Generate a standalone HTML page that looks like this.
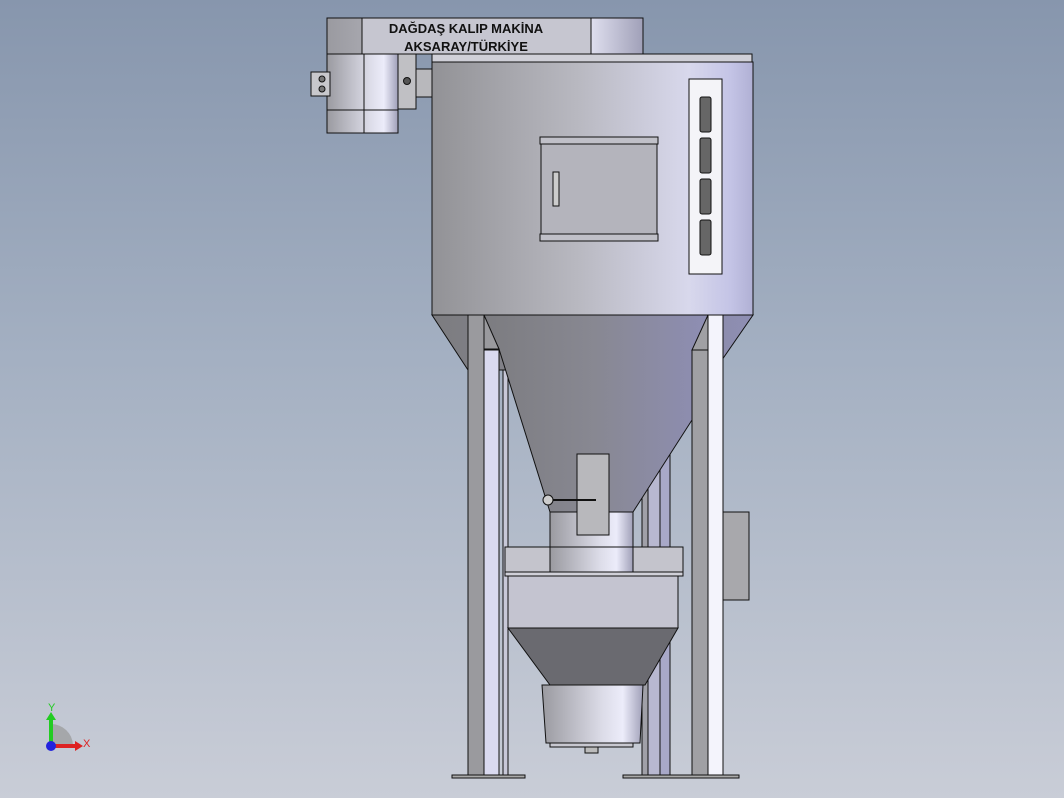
<!DOCTYPE html>
<html><head><meta charset="utf-8"><style>
html,body{margin:0;padding:0;width:1064px;height:798px;overflow:hidden;}
body{background:linear-gradient(#8796ad,#a4b0c2 45%,#c9cdd7);}
svg{position:absolute;left:0;top:0;}
text{font-family:"Liberation Sans",sans-serif;}
</style></head><body>
<svg width="1064" height="798" viewBox="0 0 1064 798">
<defs>
<linearGradient id="cyl" x1="0" x2="1"><stop offset="0" stop-color="#8e8e96"/><stop offset="0.5" stop-color="#c8c8d2"/><stop offset="0.8" stop-color="#e4e4f2"/><stop offset="1" stop-color="#a8a8c8"/></linearGradient>
<linearGradient id="body" x1="0" x2="1"><stop offset="0" stop-color="#929296"/><stop offset="0.45" stop-color="#b8b8c0"/><stop offset="0.8" stop-color="#d8d8ec"/><stop offset="0.93" stop-color="#c4c4e6"/><stop offset="1" stop-color="#b0b0d4"/></linearGradient>
<linearGradient id="cone" x1="0" x2="1"><stop offset="0" stop-color="#7c7c80"/><stop offset="0.5" stop-color="#888892"/><stop offset="1" stop-color="#8e8eb4"/></linearGradient>
<linearGradient id="small" x1="0" x2="1"><stop offset="0" stop-color="#9a9aa0"/><stop offset="0.6" stop-color="#dcdce8"/><stop offset="0.8" stop-color="#ececfa"/><stop offset="1" stop-color="#a0a0b8"/></linearGradient>
</defs>
<g stroke="#111" stroke-width="1">
<!-- back legs -->
<rect x="503" y="360" width="5" height="415" fill="#c8c8d8"/>
<rect x="642" y="440" width="6" height="335" fill="#a0a0a8"/>
<rect x="648" y="440" width="12" height="335" fill="#b8b8d0"/>
<rect x="660" y="440" width="10" height="335" fill="#a8a8c8"/>
<!-- outer cone skirt -->
<polygon points="432,315 753,315 715,370 468,370" fill="url(#cone)"/>
<!-- cone -->
<polygon points="483,315 708,315 692,420 633,512 550,512 499,349" fill="url(#cone)"/>
<!-- legs -->
<rect x="468" y="315" width="16" height="460" fill="#9a9a9e"/>
<rect x="484" y="350" width="15" height="425" fill="#dadaf0"/>
<polygon points="484,315 499,349 484,349" fill="#9a9a9e"/>
<rect x="692" y="350" width="16" height="425" fill="#a0a0a4"/>
<rect x="708" y="315" width="15" height="460" fill="#f4f4fc"/>
<polygon points="708,315 692,350 708,350" fill="#a0a0a4"/>
<!-- feet -->
<rect x="452" y="775" width="73" height="3" fill="#aaa"/>
<rect x="623" y="775" width="116" height="3" fill="#aaa"/>
<!-- right box -->
<rect x="723" y="512" width="26" height="88" fill="#a8a8ac"/>
<!-- neck -->
<rect x="550" y="512" width="83" height="60" fill="url(#small)"/>
<!-- valve -->
<rect x="577" y="454" width="32" height="81" fill="#b8b8bc"/>
<line x1="548" y1="500" x2="596" y2="500" stroke-width="2"/>
<circle cx="548" cy="500" r="5" fill="#ccc"/>
<!-- collar -->
<rect x="505" y="547" width="178" height="25" fill="#c4c4cc"/>
<rect x="550" y="547" width="83" height="25" fill="url(#small)"/>
<rect x="505" y="572" width="178" height="4" fill="#d0d0d8"/>
<rect x="508" y="576" width="170" height="52" fill="#c4c4d0"/>
<polygon points="508,628 678,628 645,685 550,685" fill="#6a6a70"/>
<polygon points="542,685 643,685 640,743 546,743" fill="url(#small)"/>
<rect x="550" y="743" width="83" height="4" fill="#c8c8d0"/>
<rect x="585" y="747" width="13" height="6" fill="#bbb"/>
<!-- top ducts -->
<rect x="327" y="18" width="316" height="36" fill="url(#small)"/>
<rect x="362" y="18" width="229" height="36" fill="#c6c6d0"/>
<rect x="327" y="54" width="71" height="79" fill="url(#small)"/>
<line x1="364" y1="54" x2="364" y2="133"/>
<line x1="327" y1="110" x2="398" y2="110"/>
<rect x="398" y="54" width="18" height="55" fill="#c0c0c4"/>
<circle cx="407" cy="81" r="3.5" fill="#555"/>
<rect x="416" y="69" width="19" height="28" fill="#b8b8bc"/>
<rect x="311" y="72" width="19" height="24" fill="#c8c8cc"/>
<circle cx="322" cy="79" r="3" fill="#777"/><circle cx="322" cy="89" r="3" fill="#777"/>
<!-- body -->
<rect x="432" y="54" width="320" height="8" fill="#d0d0d8"/>
<rect x="432" y="62" width="321" height="253" fill="url(#body)"/>
<!-- door -->
<rect x="540" y="137" width="118" height="7" fill="#c0c0c8"/>
<rect x="541" y="144" width="116" height="90" fill="#b4b4bc"/>
<rect x="540" y="234" width="118" height="7" fill="#c0c0c8"/>
<rect x="553" y="172" width="6" height="34" fill="#ccc"/>
<!-- panel -->
<rect x="689" y="79" width="33" height="195" fill="#f4f4f8"/>
<rect x="700" y="97" width="11" height="35" rx="2" fill="#666"/>
<rect x="700" y="138" width="11" height="35" rx="2" fill="#666"/>
<rect x="700" y="179" width="11" height="35" rx="2" fill="#666"/>
<rect x="700" y="220" width="11" height="35" rx="2" fill="#666"/>
</g>
<text x="466" y="33" font-size="13" font-weight="bold" text-anchor="middle" fill="#111">DAĞDAŞ KALIP MAKİNA</text>
<text x="466" y="51" font-size="13" font-weight="bold" text-anchor="middle" fill="#111">AKSARAY/TÜRKİYE</text>
<!-- axis -->
<path d="M51 745 L51 724 A22 22 0 0 1 73 745 Z" fill="#999" opacity="0.7"/>
<line x1="51" y1="745" x2="51" y2="718" stroke="#2c2" stroke-width="4"/>
<polygon points="46,720 56,720 51,712" fill="#2c2"/>
<line x1="51" y1="746" x2="76" y2="746" stroke="#d22" stroke-width="4"/>
<polygon points="75,741 75,751 83,746" fill="#d22"/>
<circle cx="51" cy="746" r="5" fill="#22d"/>
<text x="48" y="711" font-size="11" fill="#2c2">Y</text>
<text x="83" y="747" font-size="11" fill="#d22">X</text>
</svg>
</body></html>
